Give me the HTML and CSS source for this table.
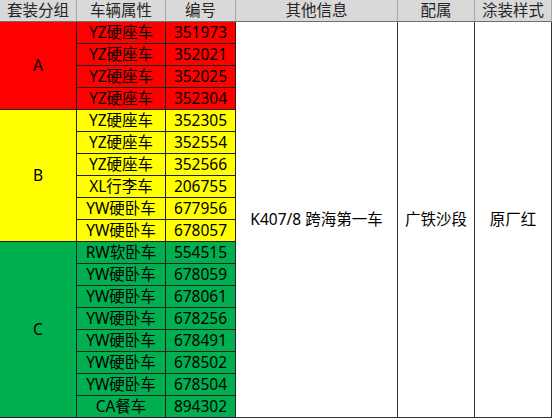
FILE: index.html
```html
<!DOCTYPE html>
<html lang="zh">
<head>
<meta charset="utf-8">
<title>套装分组</title>
<link rel="stylesheet" href="styles.css">
</head>
<body>
<div class="sheet">
  <div class="h">套装分组</div>
  <div class="h">车辆属性</div>
  <div class="h">编号</div>
  <div class="h">其他信息</div>
  <div class="h">配属</div>
  <div class="h">涂装样式</div>

  <div class="g red span4">A</div>
  <div class="c attr red">YZ硬座车</div><div class="c num red">351973</div>
  <div class="m col4">K407/8 跨海第一车</div>
  <div class="m col5">广铁沙段</div>
  <div class="m col6">原厂红</div>
  <div class="c attr red">YZ硬座车</div><div class="c num red">352021</div>
  <div class="c attr red">YZ硬座车</div><div class="c num red">352025</div>
  <div class="c attr red">YZ硬座车</div><div class="c num red">352304</div>

  <div class="g yellow span6">B</div>
  <div class="c attr yellow">YZ硬座车</div><div class="c num yellow">352305</div>
  <div class="c attr yellow">YZ硬座车</div><div class="c num yellow">352554</div>
  <div class="c attr yellow">YZ硬座车</div><div class="c num yellow">352566</div>
  <div class="c attr yellow">XL行李车</div><div class="c num yellow">206755</div>
  <div class="c attr yellow">YW硬卧车</div><div class="c num yellow">677956</div>
  <div class="c attr yellow">YW硬卧车</div><div class="c num yellow">678057</div>

  <div class="g green span8">C</div>
  <div class="c attr green">RW软卧车</div><div class="c num green">554515</div>
  <div class="c attr green">YW硬卧车</div><div class="c num green">678059</div>
  <div class="c attr green">YW硬卧车</div><div class="c num green">678061</div>
  <div class="c attr green">YW硬卧车</div><div class="c num green">678256</div>
  <div class="c attr green">YW硬卧车</div><div class="c num green">678491</div>
  <div class="c attr green">YW硬卧车</div><div class="c num green">678502</div>
  <div class="c attr green">YW硬卧车</div><div class="c num green">678504</div>
  <div class="c attr green">CA餐车</div><div class="c num green">894302</div>
</div>
</body>
</html>
```
FILE: styles.css
```css
html, body {
  margin: 0;
  padding: 0;
  background: #ffffff;
}
.sheet {
  display: grid;
  grid-template-columns: 77px 89px 70px 162px 77px 77px;
  grid-template-rows: 22px;
  grid-auto-rows: 22px;
  width: 552px;
  font-family: "Noto Sans", "Noto Sans CJK SC", sans-serif;
  font-size: 15.5px;
  color: #000;
}
.sheet > div {
  box-sizing: border-box;
  display: flex;
  align-items: center;
  justify-content: center;
  white-space: nowrap;
  line-height: 1;
}
.h {
  background: #d9d9d9;
  border-right: 1px solid #a6a6a6;
  border-bottom: 1px solid #6e6e6e;
  color: #262626;
}
.g {
  grid-column: 1;
  border-right: 1px solid #202020;
  border-bottom: 1px solid #202020;
}
.span4 { grid-row: span 4; }
.span6 { grid-row: span 6; }
.span8 { grid-row: span 8; }
.c {
  border-right: 1px solid #202020;
  border-bottom: 1px solid #202020;
}
.attr { grid-column: 2; }
.num { grid-column: 3; }
.m {
  grid-row: 2 / 20;
  background: #ffffff;
  border-right: 1px solid #333333;
  border-bottom: 1px solid #333333;
}
.col4 { grid-column: 4; }
.col5 { grid-column: 5; }
.col6 { grid-column: 6; }
.red { background: #ff0000; }
.yellow { background: #ffff00; }
.green { background: #00b050; }
```
